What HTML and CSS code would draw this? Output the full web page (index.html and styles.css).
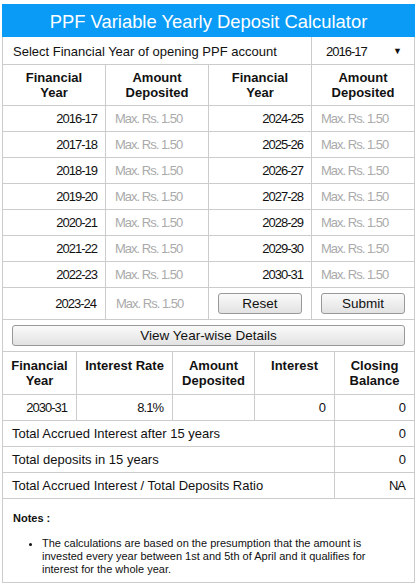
FILE: index.html
```html
<!DOCTYPE html>
<html lang="en">
<head>
    <meta charset="UTF-8">
    <meta name="viewport" content="width=device-width, initial-scale=1.0">
    <title>PPF Variable Yearly Deposit Calculator</title>
    <link rel="stylesheet" href="styles.css">
</head>
<body>

<div class="calc">
    <div class="calc-title">PPF Variable Yearly Deposit Calculator</div>

    <table class="deposit">
        <tr class="select-row">
            <td colspan="3" class="select-label">Select Financial Year of opening PPF account</td>
            <td class="select-cell">
                <div class="year-select"><span class="num">2016-17</span><span class="arrow">&#9660;</span></div>
            </td>
        </tr>
        <tr>
            <th>Financial<br>Year</th>
            <th>Amount<br>Deposited</th>
            <th>Financial<br>Year</th>
            <th>Amount<br>Deposited</th>
        </tr>
        <tr>
            <td class="year">2016-17</td><td><input type="text" placeholder="Max. Rs. 1.50"></td>
            <td class="year">2024-25</td><td><input type="text" placeholder="Max. Rs. 1.50"></td>
        </tr>
        <tr>
            <td class="year">2017-18</td><td><input type="text" placeholder="Max. Rs. 1.50"></td>
            <td class="year">2025-26</td><td><input type="text" placeholder="Max. Rs. 1.50"></td>
        </tr>
        <tr>
            <td class="year">2018-19</td><td><input type="text" placeholder="Max. Rs. 1.50"></td>
            <td class="year">2026-27</td><td><input type="text" placeholder="Max. Rs. 1.50"></td>
        </tr>
        <tr>
            <td class="year">2019-20</td><td><input type="text" placeholder="Max. Rs. 1.50"></td>
            <td class="year">2027-28</td><td><input type="text" placeholder="Max. Rs. 1.50"></td>
        </tr>
        <tr>
            <td class="year">2020-21</td><td><input type="text" placeholder="Max. Rs. 1.50"></td>
            <td class="year">2028-29</td><td><input type="text" placeholder="Max. Rs. 1.50"></td>
        </tr>
        <tr>
            <td class="year">2021-22</td><td><input type="text" placeholder="Max. Rs. 1.50"></td>
            <td class="year">2029-30</td><td><input type="text" placeholder="Max. Rs. 1.50"></td>
        </tr>
        <tr>
            <td class="year">2022-23</td><td><input type="text" placeholder="Max. Rs. 1.50"></td>
            <td class="year">2030-31</td><td><input type="text" placeholder="Max. Rs. 1.50"></td>
        </tr>
        <tr class="button-row">
            <td class="year">2023-24</td><td><input type="text" placeholder="Max. Rs. 1.50"></td>
            <td class="btn-cell"><button>Reset</button></td>
            <td class="btn-cell"><button>Submit</button></td>
        </tr>
        <tr class="button-row">
            <td colspan="4" class="btn-cell"><button>View Year-wise Details</button></td>
        </tr>
    </table>

    <table class="results">
        <colgroup>
            <col class="c-year">
            <col class="c-rate">
            <col class="c-amount">
            <col class="c-interest">
            <col class="c-balance">
        </colgroup>
        <tr>
            <th>Financial<br>Year</th>
            <th>Interest Rate</th>
            <th>Amount<br>Deposited</th>
            <th>Interest</th>
            <th>Closing<br>Balance</th>
        </tr>
        <tr>
            <td class="num">2030-31</td>
            <td class="num">8.1%</td>
            <td class="num"></td>
            <td class="num">0</td>
            <td class="num">0</td>
        </tr>
        <tr>
            <td colspan="4">Total Accrued Interest after 15 years</td>
            <td class="num">0</td>
        </tr>
        <tr>
            <td colspan="4">Total deposits in 15 years</td>
            <td class="num">0</td>
        </tr>
        <tr>
            <td colspan="4">Total Accrued Interest / Total Deposits Ratio</td>
            <td class="num">NA</td>
        </tr>
    </table>

    <div class="notes">
        <h4>Notes :</h4>
        <ul>
            <li>The calculations are based on the presumption that the amount is invested every year between 1st and 5th of April and it qualifies for interest for the whole year.</li>
        </ul>
    </div>
</div>

</body>
</html>
```

FILE: styles.css
```css
body {
    font-family: "Liberation Sans", Arial, sans-serif;
    font-size: 13px;
    color: #111;
    background-color: #fff;
    margin: 0;
}
.calc {
    margin: 4px 2px 0;
}
.calc-title {
    background-color: #0a9bf7;
    color: #fff;
    font-size: 18.4px;
    height: 33px;
    line-height: 35px;
    text-align: center;
}
table {
    width: 100%;
    border-collapse: collapse;
    table-layout: fixed;
}
th, td {
    border: 1px solid #ccc;
    padding: 5px 8px;
    line-height: 15px;
}
table tr:first-child th,
table tr:first-child td {
    border-top: none;
}
th {
    font-weight: bold;
    text-align: center;
}
.select-row td {
    padding: 7px 10px 5px;
}
.year-select {
    display: flex;
    justify-content: space-between;
    align-items: center;
    padding: 0 2px 0 4px;
}
.arrow {
    font-size: 9px;
}
.year, .num {
    text-align: right;
    letter-spacing: -1px;
}
.deposit input {
    width: 100%;
    box-sizing: border-box;
    border: none;
    padding: 0 0 0 1px;
    font-family: inherit;
    font-size: 13px;
    letter-spacing: -1px;
    outline: none;
}
.deposit input::placeholder {
    color: #aaa;
}
.button-row td {
    padding: 5px 9px;
}
.btn-cell button {
    width: 100%;
    height: 21px;
    font-family: inherit;
    font-size: 13.5px;
    color: #111;
    border: 1px solid #999;
    border-radius: 3px;
    background: linear-gradient(#fafafa, #e2e2e2);
    cursor: pointer;
}
.results th {
    vertical-align: top;
    padding: 6px 4px;
}
.results td {
    padding: 5px 9px;
}
.c-year { width: 74px; }
.c-rate { width: 96px; }
.c-amount { width: 82px; }
.c-interest { width: 80px; }
.notes {
    border: 1px solid #ccc;
    border-top: none;
    padding: 13px 10px 6px;
    font-size: 11px;
    line-height: 13px;
}
.notes h4 {
    margin: 0 0 12px;
    font-size: 11px;
}
.notes ul {
    margin: 0;
    padding-left: 29px;
}
```
